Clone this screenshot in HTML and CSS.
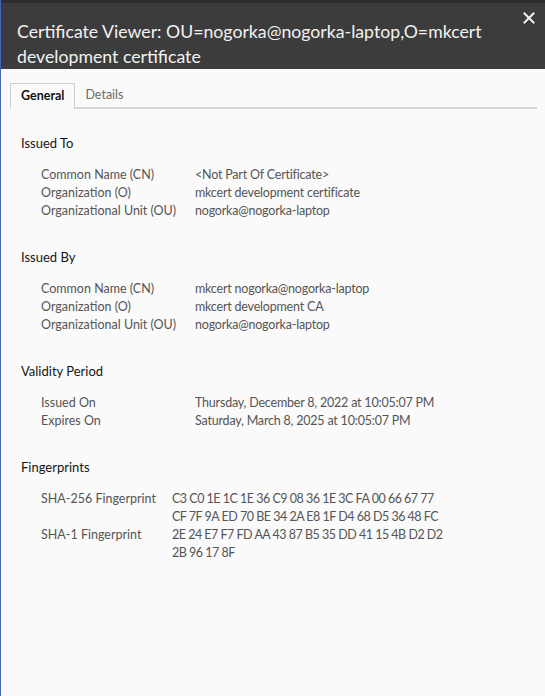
FILE: index.html
```html
<!DOCTYPE html>
<html lang="en">
<head>
<meta charset="utf-8">
<title>Certificate Viewer</title>
<link rel="stylesheet" href="styles.css">
</head>
<body>
<div class="dialog">
  <header class="titlebar">
    <h1 class="title">Certificate Viewer: OU=nogorka@nogorka-laptop,O=mkcert<br>development certificate</h1>
    <button class="close" aria-label="Close">
      <svg width="12" height="12" viewBox="0 0 12 12"><path d="M1.5 1.5 L10.5 10.5 M10.5 1.5 L1.5 10.5" stroke="#f2f2f2" stroke-width="2" stroke-linecap="square"/></svg>
    </button>
  </header>
  <nav class="tabs">
    <div class="tab active">General</div>
    <div class="tab">Details</div>
  </nav>
  <main class="content">
    <section class="section">
      <h2 class="heading">Issued To</h2>
      <div class="fields">
        <div class="label">Common Name (CN)</div><div class="value">&lt;Not Part Of Certificate&gt;</div>
        <div class="label">Organization (O)</div><div class="value">mkcert development certificate</div>
        <div class="label">Organizational Unit (OU)</div><div class="value">nogorka@nogorka-laptop</div>
      </div>
    </section>
    <section class="section">
      <h2 class="heading">Issued By</h2>
      <div class="fields">
        <div class="label">Common Name (CN)</div><div class="value">mkcert nogorka@nogorka-laptop</div>
        <div class="label">Organization (O)</div><div class="value">mkcert development CA</div>
        <div class="label">Organizational Unit (OU)</div><div class="value">nogorka@nogorka-laptop</div>
      </div>
    </section>
    <section class="section">
      <h2 class="heading">Validity Period</h2>
      <div class="fields">
        <div class="label">Issued On</div><div class="value">Thursday, December 8, 2022 at 10:05:07 PM</div>
        <div class="label">Expires On</div><div class="value">Saturday, March 8, 2025 at 10:05:07 PM</div>
      </div>
    </section>
    <section class="section">
      <h2 class="heading">Fingerprints</h2>
      <div class="fields fields-narrow">
        <div class="label">SHA-256 Fingerprint</div><div class="value hex">C3 C0 1E 1C 1E 36 C9 08 36 1E 3C FA 00 66 67 77<br>CF 7F 9A ED 70 BE 34 2A E8 1F D4 68 D5 36 48 FC</div>
        <div class="label">SHA-1 Fingerprint</div><div class="value hex">2E 24 E7 F7 FD AA 43 87 B5 35 DD 41 15 4B D2 D2<br>2B 96 17 8F</div>
      </div>
    </section>
  </main>
</div>
</body>
</html>
```
FILE: styles.css
```css
html, body {
  margin: 0;
  padding: 0;
  height: 100%;
}
body {
  background: #fafafa;
  font-family: "Lato", "Noto Sans", sans-serif;
}
.dialog {
  min-height: 100%;
  box-sizing: border-box;
  border-left: 1px solid #4463b8;
  background: #fafafa;
}
.titlebar {
  display: flex;
  justify-content: space-between;
  align-items: flex-start;
  background: #3c3c3c;
  border-top: 3px solid #2d2d2d;
  padding: 16px 8px 0 16px;
  box-sizing: border-box;
  height: 69px;
}
.title {
  margin: 0;
  font-weight: 400;
  font-size: 17.7px;
  line-height: 25px;
  color: #f2f2f2;
}
.close {
  border: 0;
  background: none;
  padding: 0;
  margin-top: -9px;
  width: 16px;
  height: 16px;
  display: flex;
  align-items: center;
  justify-content: center;
}
.tabs {
  display: flex;
  margin: 14px 8px 0 9px;
  border-bottom: 2px solid #d6d6d6;
  height: 24px;
}
.tab {
  font-size: 12.5px;
  line-height: 24px;
  padding: 0 10px;
  color: #6b6b6b;
  margin-bottom: -2px;
}
.tab.active {
  color: #111;
  font-weight: 700;
  line-height: 23px;
  background: #fafafa;
  border: 1px solid #cfcfcf;
  border-bottom: 0;
  padding-bottom: 2px;
}
.content {
  padding: 25px 0 0 20px;
}
.section {
  margin-bottom: 28px;
}
.heading {
  margin: 0 0 14px;
  font-size: 13px;
  font-weight: 400;
  line-height: 18px;
  color: #151515;
}
.fields {
  display: grid;
  grid-template-columns: 154px 1fr;
  padding-left: 20px;
  font-size: 12.5px;
  line-height: 18px;
  color: #555;
}
.value {
  letter-spacing: -0.2px;
}
.value.hex {
  letter-spacing: -0.5px;
}
.fields-narrow {
  grid-template-columns: 131px 1fr;
}
```
